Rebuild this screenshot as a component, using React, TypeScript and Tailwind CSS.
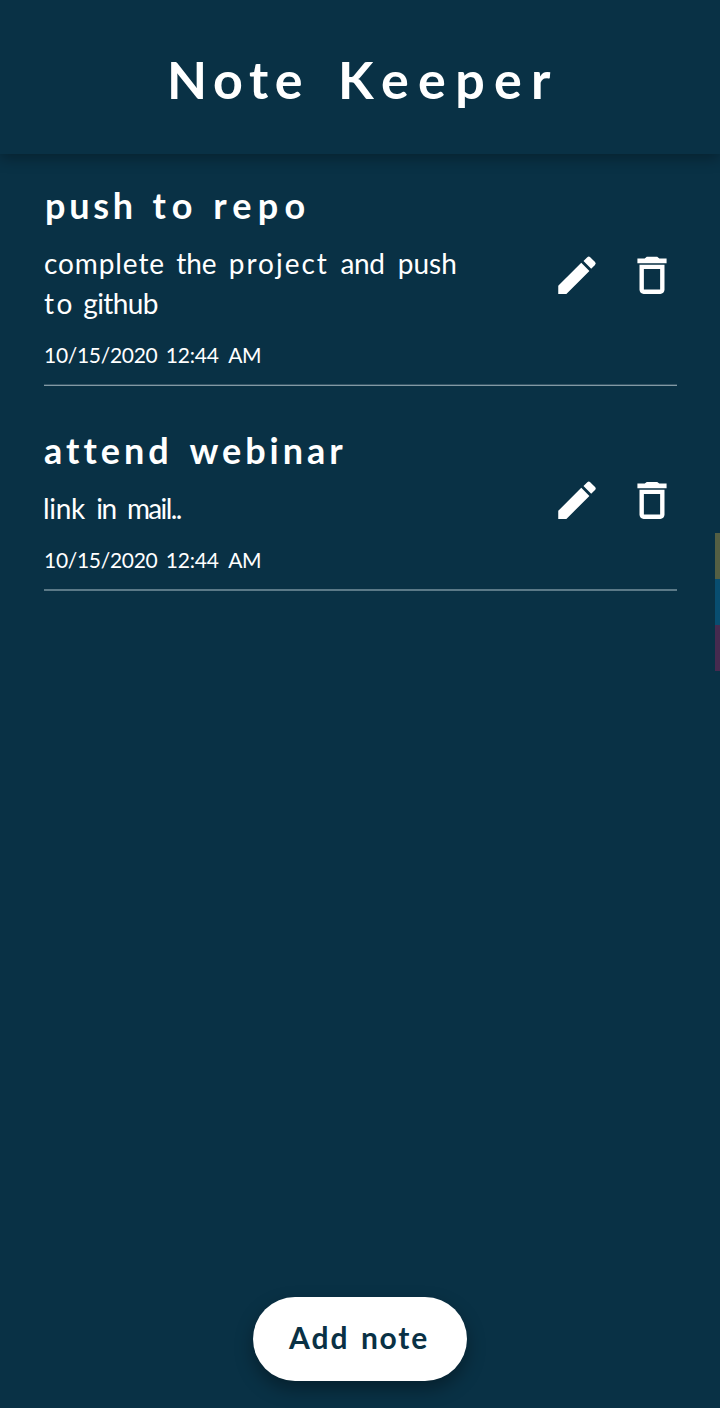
import { Fragment } from "react";

type Word = [text: string, className: string];

type Note = {
  id: string;
  title: Word[];
  lines: Word[][];
  date: Word[];
  ruleClass: string;
};

const date: Word[] = [
  ["10/15/2020", "tracking-[-0.3px]"],
  ["12:44", "ml-[3px] tracking-[-0.2px]"],
  ["AM", "ml-[4px] tracking-[-0.5px]"],
];

const notes: Note[] = [
  {
    id: "push",
    title: [
      ["push", "ml-px tracking-[3.7px]"],
      ["to", "ml-[7px] tracking-[6px]"],
      ["repo", "ml-[6px] tracking-[6.3px]"],
    ],
    lines: [
      [
        ["complete", "tracking-[0.9px]"],
        ["the", "ml-[4px]"],
        ["project", "ml-[5px] tracking-[2px]"],
        ["and", "ml-[4.5px] tracking-[-0.4px]"],
        ["push", "ml-[6px]"],
      ],
      [
        ["to", "tracking-[2.6px]"],
        ["github", "ml-px tracking-[-0.6px]"],
      ],
    ],
    date,
    ruleClass: "border-t border-t-[#355566] bg-[#8299a4]",
  },
  {
    id: "webinar",
    title: [
      ["attend", "tracking-[4px]"],
      ["webinar", "ml-[8px] tracking-[4px]"],
    ],
    lines: [
      [
        ["link", "-ml-px tracking-[-0.3px]"],
        ["in", "ml-[4px] tracking-[-1.4px]"],
        ["mail..", "ml-[4px] tracking-[-1.6px]"],
      ],
    ],
    date,
    ruleClass: "bg-[#5b7987]",
  },
];

function Words({ words }: { words: Word[] }) {
  return (
    <>
      {words.map(([text, className], i) => (
        <Fragment key={text}>
          {i > 0 && " "}
          <span className={className}>{text}</span>
        </Fragment>
      ))}
    </>
  );
}

function EditIcon() {
  return (
    <svg viewBox="0 -0.1 24 24" className="size-[50px] fill-white">
      <path d="M3 17.1V21h3.9L17.95 9.95l-3.9-3.9L3 17.1zM20.65 7.04a.996.996 0 0 0 0-1.41l-2.3-2.3a.996.996 0 0 0-1.41 0l-1.83 1.83 3.7 3.7 1.84-1.82z" />
    </svg>
  );
}

function DeleteIcon() {
  return (
    <svg viewBox="0 -0.1 24 24" className="size-[50px] fill-white">
      <path d="M6 19c0 1.1.9 2 2 2h8c1.1 0 2-.9 2-2V7H6v12zM8.1 9h7.8v9.9H8.1V9zm7.4-5l-1-.8h-5l-1 .8H5v2.3h14V4h-3.5z" />
    </svg>
  );
}

function NoteItem({ note }: { note: Note }) {
  return (
    <li>
      <div className="flex items-center justify-between">
        <div className="pt-[15px] pb-[15px] whitespace-nowrap">
          <h2 className="text-[36px] leading-[48px] font-bold">
            <Words words={note.title} />
          </h2>
          <div className="mt-[14px] text-[28px] leading-10">
            {note.lines.map((line, i) => (
              <p key={i}>
                <Words words={line} />
              </p>
            ))}
          </div>
          <p className="mt-[18px] text-[21px] leading-7">
            <Words words={note.date} />
          </p>
        </div>
        <div className="flex gap-[25px]">
          <button aria-label="Edit">
            <EditIcon />
          </button>
          <button aria-label="Delete">
            <DeleteIcon />
          </button>
        </div>
      </div>
      <div className={`h-[2px] ${note.ruleClass}`} />
    </li>
  );
}

export default function App() {
  return (
    <div className="relative flex h-[1408px] w-[720px] flex-col overflow-hidden bg-[#093145] font-['Lato',sans-serif] text-white">
      <header className="h-[154px] shrink-0 pt-[49px] pl-[167px] shadow-[0_4px_14px_rgba(0,0,0,0.32)]">
        <h1 className="text-[52px] leading-[60px] font-bold whitespace-nowrap">
          <Words words={[["Note", "tracking-[6.7px]"], ["Keeper", "ml-[16px] tracking-[9.3px]"]]} />
        </h1>
      </header>
      <ul className="flex flex-1 flex-col gap-[25px] pt-3 pr-[43px] pl-11">
        {notes.map((note) => (
          <NoteItem key={note.id} note={note} />
        ))}
      </ul>
      <footer className="flex h-[111px] shrink-0 items-start justify-center">
        <button className="h-[84px] w-[214px] rounded-full bg-white pb-1 pl-9 text-left text-[30px] font-bold whitespace-nowrap text-[#093145] shadow-[0_8px_18px_rgba(0,0,0,0.34)]">
          <Words words={[["Add", "tracking-[2px]"], ["note", "ml-[4px] tracking-[1.8px]"]]} />
        </button>
      </footer>
      <div className="absolute top-[533px] right-0 flex w-[5px] flex-col">
        <div className="h-[46px] bg-[#545f43]" />
        <div className="h-[46px] bg-[#084d70]" />
        <div className="h-[46px] bg-[#462a4f]" />
      </div>
    </div>
  );
}
